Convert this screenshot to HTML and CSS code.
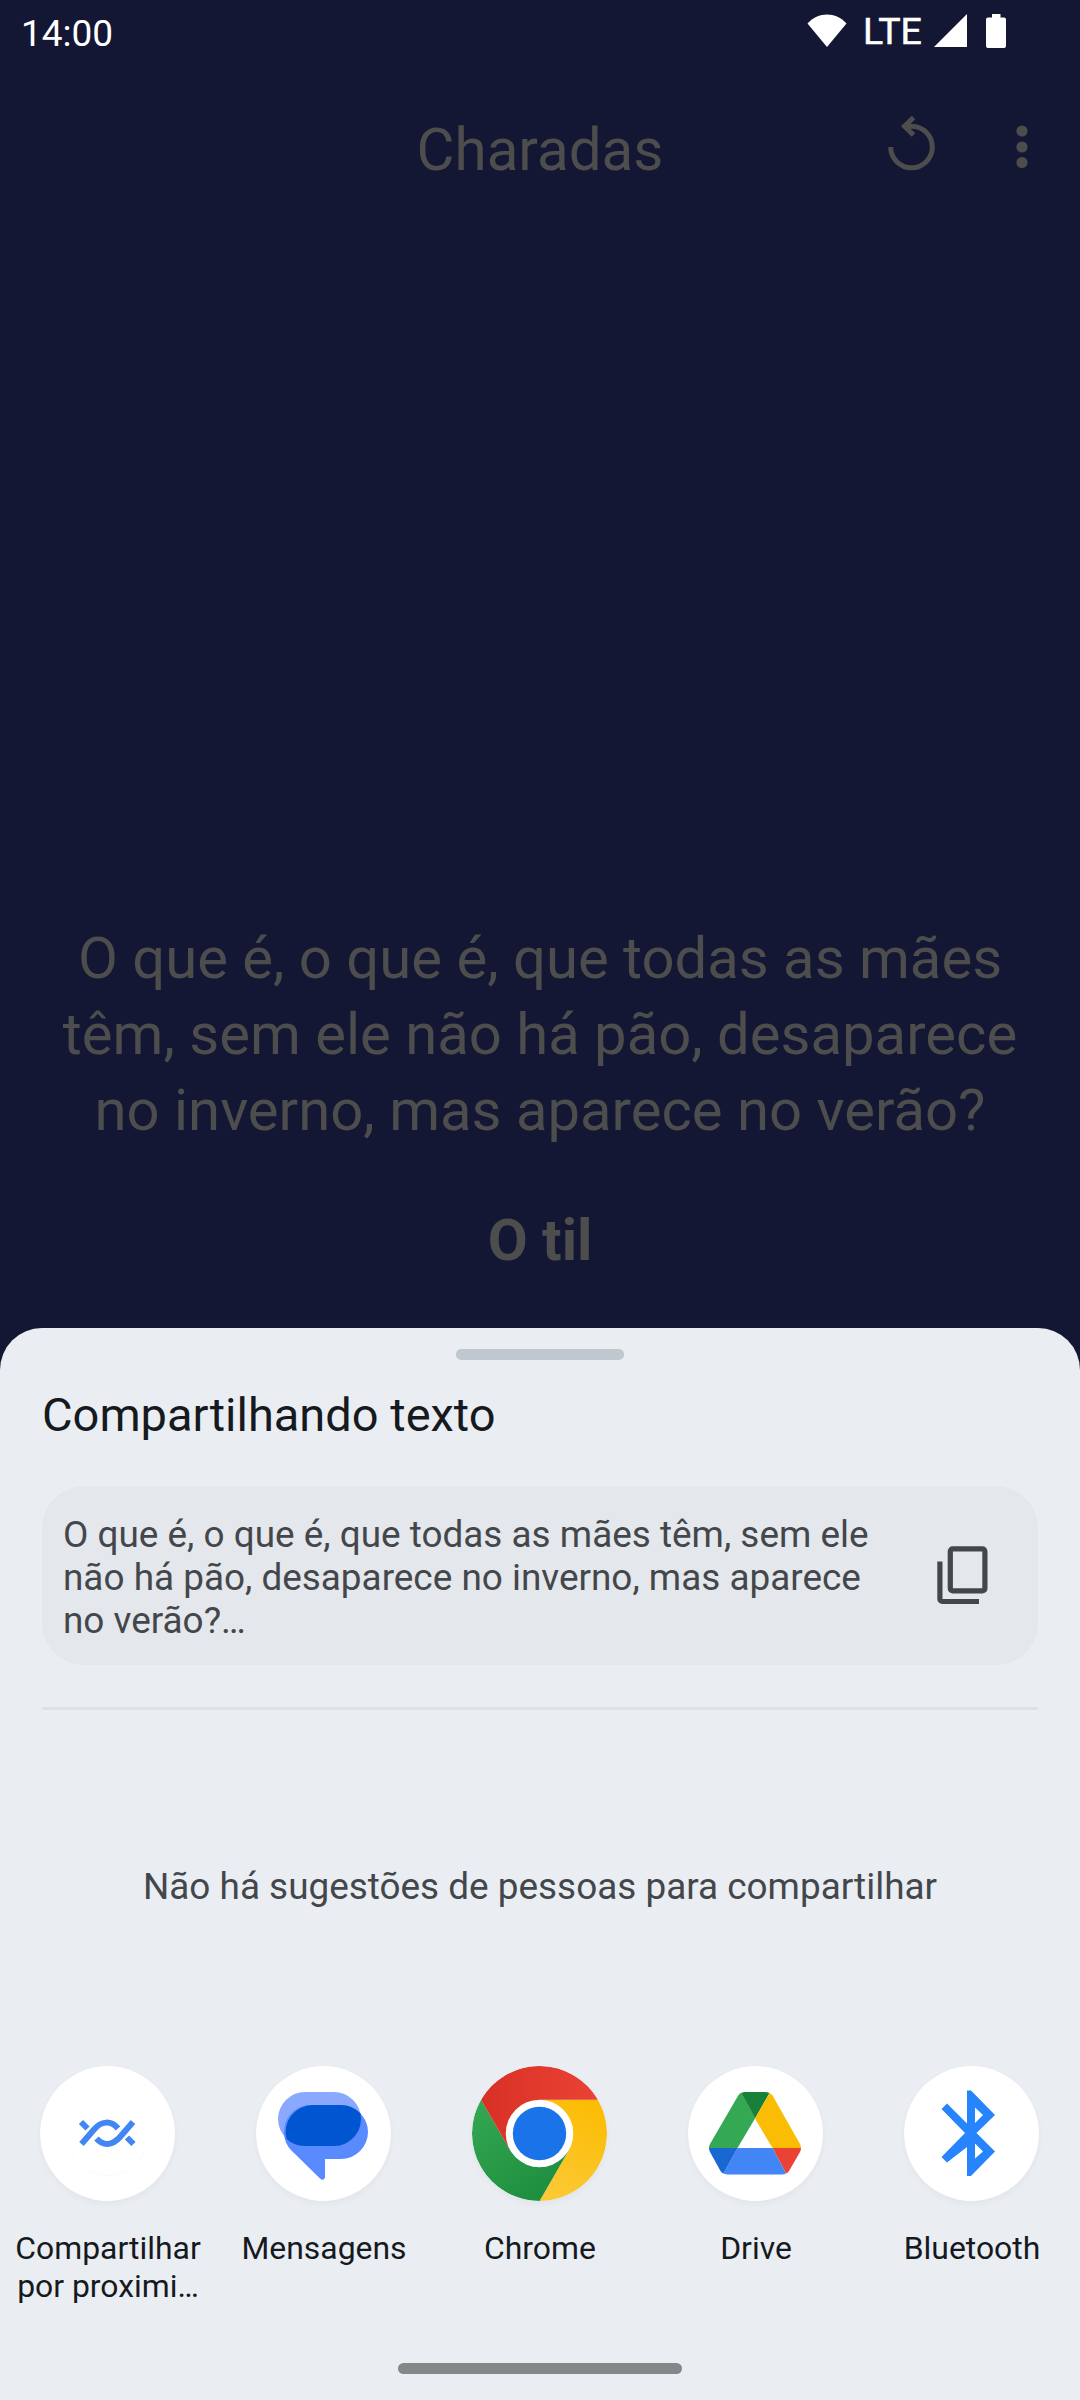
FILE: index.html
```html
<!DOCTYPE html>
<html lang="pt-BR">
<head>
    <meta charset="UTF-8">
    <title>Charadas</title>
    <link rel="stylesheet" href="styles.css">
</head>
<body>
    <div id="app">
        <div class="status-bar">
            <span class="clock">14:00</span>
            <div class="status-icons">
                <svg class="wifi" width="40" height="34" viewBox="0 0 40 34"><path d="M20 33L.5 9.500C11-2.500 29-2.500 39.500 9.500z" fill="#fff"/></svg>
                <span class="network">LTE</span>
                <svg class="signal" width="33" height="33" viewBox="0 0 33 33"><path d="M0 33L33 0v33z" fill="#fff"/></svg>
                <svg class="battery" width="20" height="34" viewBox="0 0 20 34"><path d="M6 0h8.500v3.500H18a2 2 0 0 1 2 2V32a2 2 0 0 1-2 2H2a2 2 0 0 1-2-2V5.500a2 2 0 0 1 2-2h4z" fill="#fff"/></svg>
            </div>
        </div>

        <header class="toolbar">
            <h1>Charadas</h1>
            <div class="actions">
                <svg class="reload" width="48" height="56" viewBox="0 0 48 56"><path d="M2.700 32A20.800 20.800 0 1 0 23.500 11.200H17M25.500 2.500L16.500 11.200l9 8.800" fill="none" stroke="#4d4d4d" stroke-width="5"/></svg>
                <svg class="more" width="12" height="44" viewBox="0 0 12 44"><g fill="#4d4d4d"><circle cx="6" cy="6" r="5.600"/><circle cx="6" cy="22" r="5.600"/><circle cx="6" cy="37.500" r="5.600"/></g></svg>
            </div>
        </header>

        <main class="riddle">
            <p class="question">O que é, o que é, que todas as mães<br>têm, sem ele não há pão, desaparece<br>no inverno, mas aparece no verão?</p>
            <p class="answer">O til</p>
        </main>

        <section class="sheet">
            <div class="drag-handle"></div>
            <h2>Compartilhando texto</h2>
            <div class="preview">
                <p>O que é, o que é, que todas as mães têm, sem ele<br>não há pão, desaparece no inverno, mas aparece<br>no verão?…</p>
                <svg width="51" height="59" viewBox="0 0 51 59"><g fill="none" stroke="#43474b" stroke-width="5.200"><rect x="13.300" y="2.900" width="34.600" height="42" rx="2.500"/><path d="M2.900 15.500V53a2.500 2.500 0 0 0 2.500 2.500H42"/></g></svg>
            </div>
            <hr>
            <p class="no-people">Não há sugestões de pessoas para compartilhar</p>

            <div class="apps">
                <div class="app">
                    <svg class="app-icon" viewBox="0 0 135 135">
                        <circle cx="67.500" cy="67.500" r="67.500" fill="#fff"/>
                        <path d="M30 85a41 41 0 0 0 75 0" fill="none" stroke="#f9fafb"/>
                        <g fill="none" stroke="#4285f4" stroke-width="6">
                            <path d="M41.500 78L54 63.500C61 55 71 54 78 62.500M93 56L80 71C72 80 63 80 56.500 72.500"/>
                            <path d="M41 56l6.500 6.500M87 71.500l6.500 6.500"/>
                        </g>
                    </svg>
                    <span>Compartilhar<br>por proximi…</span>
                </div>
                <div class="app">
                    <svg class="app-icon" viewBox="0 0 135 135">
                        <circle cx="67.500" cy="67.500" r="67.500" fill="#fff"/>
                        <path d="M49 26h29a27 27 0 0 1 0 54H49a27 27 0 0 1 0-54z" fill="#8ba8ff"/>
                        <path d="M57 39h28a27 27 0 0 1 0 54H69v18.500q-1.500 4-5 1L38 87A27 27 0 0 1 57 39z" fill="#598bff"/>
                        <path d="M57 39h28a27 27 0 0 1 19.500 8.500A27 27 0 0 1 78 80H49a27 27 0 0 1-18.500-7A27 27 0 0 1 57 39z" fill="#0056d0"/>
                    </svg>
                    <span>Mensagens</span>
                </div>
                <div class="app">
                    <svg class="app-icon" viewBox="0 0 135 135">
                        <defs>
                            <linearGradient id="red"><stop offset="0" stop-color="#d93025"/><stop offset="1" stop-color="#ea4335"/></linearGradient>
                            <linearGradient id="green" x1="0" y1="0" x2=".7" y2="1"><stop offset="0" stop-color="#34a853"/><stop offset="1" stop-color="#1e8e3e"/></linearGradient>
                            <linearGradient id="yellow" x1=".7" y1="0" x2=".3" y2="1"><stop offset="0" stop-color="#fbbc04"/><stop offset="1" stop-color="#fcc934"/></linearGradient>
                        </defs>
                        <path d="M67.500 33.750H125.960A67.500 67.500 0 0 1 67.500 135L96.730 84.380z" fill="url(#yellow)"/>
                        <path d="M38.270 84.380L9.040 33.750A67.500 67.500 0 0 0 67.500 135L96.730 84.380z" fill="url(#green)"/>
                        <path d="M38.270 84.380L9.040 33.750A67.500 67.500 0 0 1 125.960 33.750H67.500z" fill="url(#red)"/>
                        <circle cx="67.500" cy="67.500" r="33.750" fill="#fff"/>
                        <circle cx="67.500" cy="67.500" r="26.700" fill="#1a73e8"/>
                    </svg>
                    <span>Chrome</span>
                </div>
                <div class="app">
                    <svg class="app-icon" viewBox="0 0 135 135">
                        <circle cx="67.500" cy="67.500" r="67.500" fill="#fff"/>
                        <path d="M67 52.500L49.500 82H21q0-2 1-4L50.500 29q1-1.500 3-2.500z" fill="#34a853"/>
                        <path d="M53.500 27q1.500-1 3.500-1h20q2.500 0 4.500 1L67 52.500z" fill="#188038"/>
                        <path d="M81.500 27q2 1 3 2.500L112 78q1 2 1 4H84.500L67 52.500z" fill="#fbbc04"/>
                        <path d="M84.500 82H113q0 2-1 4l-11 19q-1 1.500-3 2.500z" fill="#ea4335"/>
                        <path d="M49.500 82h35L98 107.500q-1.500 1-4 1H40q-2.500 0-4.500-1z" fill="#4285f4"/>
                        <path d="M21 82h28.500l-14 25.500q-2-1-3-2.500L22 86q-1-2-1-4z" fill="#1967d2"/>
                    </svg>
                    <span>Drive</span>
                </div>
                <div class="app">
                    <svg class="app-icon" viewBox="0 0 135 135">
                        <circle cx="67.500" cy="67.500" r="67.500" fill="#fff"/>
                        <path d="M63 24.500h4L91 49 72.500 67 91 85.500 67 110h-4V81L43 96.500 37.500 91 61 67 37.500 43l5.500-5.500L63 57.500zM71 41.500V57l8-8zM71 77.500v15l8-7z" fill="#2684fc" fill-rule="evenodd"/>
                    </svg>
                    <span>Bluetooth</span>
                </div>
            </div>
            <div class="home-bar"></div>
        </section>
    </div>
</body>
</html>
```
FILE: styles.css
```css
* {
    box-sizing: border-box;
    margin: 0;
    padding: 0;
}

body {
    font-family: Roboto, "Noto Sans", sans-serif;
    background-color: #131733;
}

svg {
    display: block;
    flex: none;
}

#app {
    width: 1080px;
    height: 2400px;
    display: flex;
    flex-direction: column;
    overflow: hidden;
    background-color: #131733;
}

.status-bar {
    height: 66px;
    padding: 0 74px 0 21px;
    display: flex;
    justify-content: space-between;
    color: #fff;
}

.clock {
    font-size: 37px;
    line-height: 67px;
}

.status-icons {
    display: flex;
    align-items: flex-start;
    padding-top: 14px;
}

.network {
    width: 60px;
    font-size: 37.5px;
    -webkit-text-stroke: 0.5px #fff;
    line-height: 35px;
    margin-left: 16px;
    margin-right: 11px;
}

.battery {
    margin-left: 19px;
}

.toolbar {
    height: 168px;
    display: grid;
    grid-template-columns: 1fr auto 1fr;
}

.toolbar h1 {
    grid-column: 2;
    font-size: 58.3px;
    font-weight: 400;
    line-height: 168px;
    color: #4d4d4d;
}

.actions {
    display: flex;
    justify-content: flex-end;
    align-items: flex-start;
    gap: 80px;
    padding: 49px 52px 0 0;
}

.more {
    margin-top: 10px;
}

.riddle {
    height: 1094px;
    padding-bottom: 50px;
    display: flex;
    flex-direction: column;
    justify-content: flex-end;
    text-align: center;
    color: #4d4d4d;
    font-size: 58px;
    line-height: 76px;
}

.answer {
    margin-top: 54px;
    font-weight: 700;
}

.sheet {
    flex: 1;
    background-color: #eaeef3;
    border-radius: 42px 42px 0 0;
    padding: 21px 0 0;
    display: flex;
    flex-direction: column;
}

.drag-handle {
    width: 168px;
    height: 11px;
    border-radius: 5px;
    background-color: #bfc7cf;
    align-self: center;
}

.sheet h2 {
    margin: 26px 42px 0;
    font-size: 47px;
    font-weight: 400;
    line-height: 57px;
    color: #161a1e;
}

.preview {
    height: 179px;
    margin: 43px 42px 0;
    padding: 0 50px 0 21px;
    display: flex;
    justify-content: space-between;
    align-items: center;
    border-radius: 42px;
    background-color: #e4e7eb;
}

.preview p {
    padding-top: 4px;
    font-size: 36.9px;
    line-height: 43px;
    color: #43474b;
}

.sheet hr {
    height: 3px;
    margin: 42px 42px 0;
    border: none;
    background-color: #dee2e6;
}

.no-people {
    margin-top: 155px;
    font-size: 36.9px;
    line-height: 43px;
    text-align: center;
    color: #43474b;
}

.apps {
    height: 270px;
    margin-top: 158px;
    display: grid;
    grid-template-columns: repeat(5, 216px);
}

.app {
    display: flex;
    flex-direction: column;
    align-items: center;
    text-align: center;
    font-size: 31.9px;
    line-height: 38px;
    color: #161a1e;
}

.app-icon {
    width: 135px;
    height: 135px;
    margin: 0 1px 28px 0;
    border-radius: 50%;
    box-shadow: 0 3px 6px rgba(0, 0, 0, 0.04);
}

.home-bar {
    width: 284px;
    height: 11px;
    margin-top: 27px;
    border-radius: 6px;
    background-color: #858889;
    align-self: center;
}
```
